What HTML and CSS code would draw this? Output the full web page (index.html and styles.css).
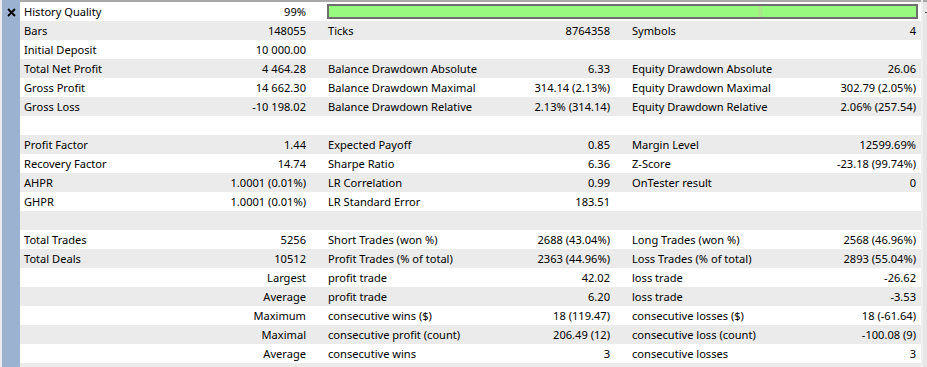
FILE: index.html
```html
<!DOCTYPE html>
<html>
<head>
<meta charset="utf-8">
<link rel="stylesheet" href="styles.css">
</head>
<body>
<div class="frame">
  <aside class="side">
    <svg class="close" width="9" height="9" viewBox="0 0 9 9"><path d="M1 1 L8 8 M8 1 L1 8" stroke="#000" stroke-width="1.8" fill="none"/></svg>
  </aside>
  <main class="report">
    <div class="row">
      <div class="cell"><span>History Quality</span><span>99%</span></div>
      <div class="barcell"><div class="bar"><div class="tick"></div></div></div>
    </div>
    <div class="row">
      <div class="cell"><span>Bars</span><span>148055</span></div>
      <div class="cell"><span>Ticks</span><span>8764358</span></div>
      <div class="cell last"><span>Symbols</span><span>4</span></div>
    </div>
    <div class="row">
      <div class="cell"><span>Initial Deposit</span><span>10 000.00</span></div>
      <div class="cell"></div>
      <div class="cell last"></div>
    </div>
    <div class="row">
      <div class="cell"><span>Total Net Profit</span><span>4 464.28</span></div>
      <div class="cell"><span>Balance Drawdown Absolute</span><span>6.33</span></div>
      <div class="cell last"><span>Equity Drawdown Absolute</span><span>26.06</span></div>
    </div>
    <div class="row">
      <div class="cell"><span>Gross Profit</span><span>14 662.30</span></div>
      <div class="cell"><span>Balance Drawdown Maximal</span><span>314.14 (2.13%)</span></div>
      <div class="cell last"><span>Equity Drawdown Maximal</span><span>302.79 (2.05%)</span></div>
    </div>
    <div class="row">
      <div class="cell"><span>Gross Loss</span><span>-10 198.02</span></div>
      <div class="cell"><span>Balance Drawdown Relative</span><span>2.13% (314.14)</span></div>
      <div class="cell last"><span>Equity Drawdown Relative</span><span>2.06% (257.54)</span></div>
    </div>
    <div class="row"></div>
    <div class="row">
      <div class="cell"><span>Profit Factor</span><span>1.44</span></div>
      <div class="cell"><span>Expected Payoff</span><span>0.85</span></div>
      <div class="cell last"><span>Margin Level</span><span>12599.69%</span></div>
    </div>
    <div class="row">
      <div class="cell"><span>Recovery Factor</span><span>14.74</span></div>
      <div class="cell"><span>Sharpe Ratio</span><span>6.36</span></div>
      <div class="cell last"><span>Z-Score</span><span>-23.18 (99.74%)</span></div>
    </div>
    <div class="row">
      <div class="cell"><span>AHPR</span><span>1.0001 (0.01%)</span></div>
      <div class="cell"><span>LR Correlation</span><span>0.99</span></div>
      <div class="cell last"><span>OnTester result</span><span>0</span></div>
    </div>
    <div class="row">
      <div class="cell"><span>GHPR</span><span>1.0001 (0.01%)</span></div>
      <div class="cell"><span>LR Standard Error</span><span>183.51</span></div>
      <div class="cell last"></div>
    </div>
    <div class="row"></div>
    <div class="row">
      <div class="cell"><span>Total Trades</span><span>5256</span></div>
      <div class="cell"><span>Short Trades (won %)</span><span>2688 (43.04%)</span></div>
      <div class="cell last"><span>Long Trades (won %)</span><span>2568 (46.96%)</span></div>
    </div>
    <div class="row">
      <div class="cell"><span>Total Deals</span><span>10512</span></div>
      <div class="cell"><span>Profit Trades (% of total)</span><span>2363 (44.96%)</span></div>
      <div class="cell last"><span>Loss Trades (% of total)</span><span>2893 (55.04%)</span></div>
    </div>
    <div class="row">
      <div class="cell"><span></span><span>Largest</span></div>
      <div class="cell"><span>profit trade</span><span>42.02</span></div>
      <div class="cell last"><span>loss trade</span><span>-26.62</span></div>
    </div>
    <div class="row">
      <div class="cell"><span></span><span>Average</span></div>
      <div class="cell"><span>profit trade</span><span>6.20</span></div>
      <div class="cell last"><span>loss trade</span><span>-3.53</span></div>
    </div>
    <div class="row">
      <div class="cell"><span></span><span>Maximum</span></div>
      <div class="cell"><span>consecutive wins ($)</span><span>18 (119.47)</span></div>
      <div class="cell last"><span>consecutive losses ($)</span><span>18 (-61.64)</span></div>
    </div>
    <div class="row">
      <div class="cell"><span></span><span>Maximal</span></div>
      <div class="cell"><span>consecutive profit (count)</span><span>206.49 (12)</span></div>
      <div class="cell last"><span>consecutive loss (count)</span><span>-100.08 (9)</span></div>
    </div>
    <div class="row">
      <div class="cell"><span></span><span>Average</span></div>
      <div class="cell"><span>consecutive wins</span><span>3</span></div>
      <div class="cell last"><span>consecutive losses</span><span>3</span></div>
    </div>
    <div class="row"></div>
  </main>
  <div class="scroll"><div class="arrow"></div></div>
</div>
</body>
</html>
```
FILE: styles.css
```css
html, body {
  margin: 0;
  padding: 0;
  background: #f0f0f0;
}
body {
  width: 927px;
  height: 367px;
  overflow: hidden;
  font-family: "Noto Sans", "Open Sans", sans-serif;
  font-size: 11.1px;
  color: #000;
}
.frame {
  display: flex;
  height: 367px;
}
.side {
  width: 20px;
  flex: none;
  border-left: 2px solid #ececec;
  background: #9bb3d1;
  display: flex;
  justify-content: center;
  align-items: flex-start;
  padding-top: 8px;
  box-sizing: border-box;
}
.close {
  display: block;
}
.report {
  width: 901px;
  flex: none;
  border-top: 2px solid #a8a8a8;
  overflow: hidden;
}
.row {
  display: grid;
  grid-template-columns: 304px 304px 1fr;
  height: 19px;
  line-height: 19px;
  background: #fff;
}
.row:nth-child(even) {
  background: #ebebeb;
}
.cell {
  display: flex;
  justify-content: space-between;
  padding: 0 18px 0 4px;
  white-space: nowrap;
}
.cell.last {
  padding-right: 5px;
}
.barcell {
  grid-column: 2 / 4;
  padding: 2px 3px 2px 3px;
}
.bar {
  height: 15px;
  box-sizing: border-box;
  border: 2px solid #6e6e6e;
  background: #98fb80;
  position: relative;
}
.tick {
  position: absolute;
  left: 429px;
  top: 0;
  width: 5px;
  height: 100%;
  background: #a6ea8c;
}
.scroll {
  margin-left: 2px;
  flex: 1;
  border-top: 2px solid #a8a8a8;
  background: #e6e6e6;
  position: relative;
}
.arrow {
  position: absolute;
  left: 2px;
  top: 10px;
  width: 3px;
  height: 1px;
  background: #505050;
}
```
